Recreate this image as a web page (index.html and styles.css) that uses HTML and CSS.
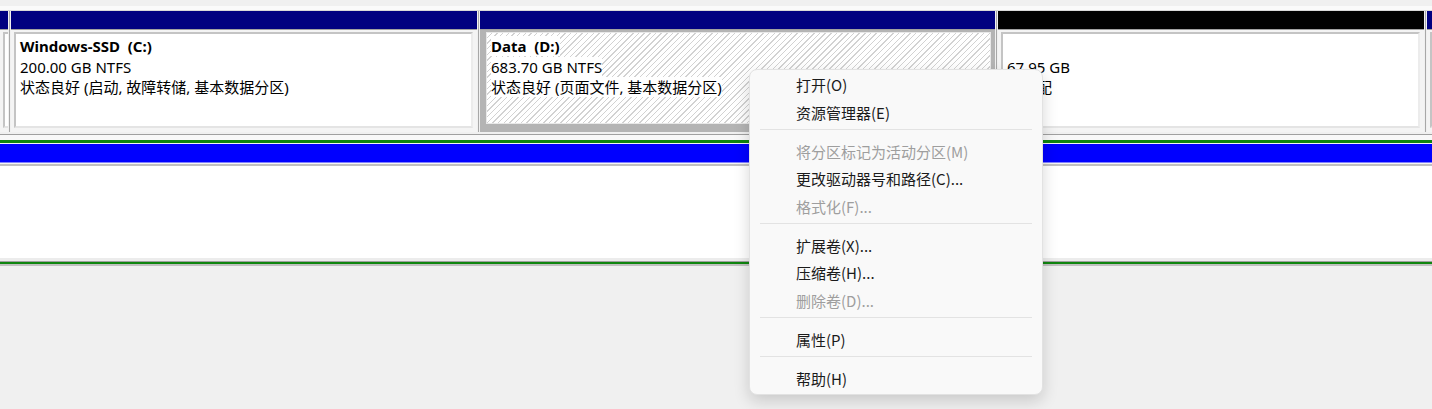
FILE: index.html
```html
<!DOCTYPE html>
<html lang="zh-CN">
<head>
  <meta charset="UTF-8" />
  <title>磁盘管理</title>
  <link rel="stylesheet" href="styles.css">
</head>
<body>
  <div class="top-edge"></div>

  <div class="disk">
    <div class="part part-edge">
      <div class="part-head"></div>
      <div class="part-body"><div class="box"></div></div>
    </div>
    <div class="part part-c">
      <div class="part-head"></div>
      <div class="part-body">
        <div class="box">
          <div class="line name">Windows-SSD&nbsp; (C:)</div>
          <div class="line">200.00 GB NTFS</div>
          <div class="line">状态良好 (启动, 故障转储, 基本数据分区)</div>
        </div>
      </div>
    </div>
    <div class="part part-d selected">
      <div class="part-head"></div>
      <div class="part-body">
        <div class="box hatched">
          <div class="line name"><span>Data&nbsp; (D:)</span></div>
          <div class="line"><span>683.70 GB NTFS</span></div>
          <div class="line"><span>状态良好 (页面文件, 基本数据分区)</span></div>
        </div>
      </div>
    </div>
    <div class="part part-free">
      <div class="part-head black"></div>
      <div class="part-body">
        <div class="box">
          <div class="line">&nbsp;</div>
          <div class="line">67.95 GB</div>
          <div class="line">未分配</div>
        </div>
      </div>
    </div>
    <div class="part part-edge">
      <div class="part-head"></div>
      <div class="part-body"><div class="box"></div></div>
    </div>
  </div>

  <div class="disk2">
    <div class="ext">
      <div class="ext-head"></div>
      <div class="ext-body"></div>
    </div>
  </div>

  <div class="menu">
    <div class="item">打开(O)</div>
    <div class="item">资源管理器(E)</div>
    <div class="sep"></div>
    <div class="item off">将分区标记为活动分区(M)</div>
    <div class="item">更改驱动器号和路径(C)...</div>
    <div class="item off">格式化(F)...</div>
    <div class="sep"></div>
    <div class="item">扩展卷(X)...</div>
    <div class="item">压缩卷(H)...</div>
    <div class="item off">删除卷(D)...</div>
    <div class="sep"></div>
    <div class="item">属性(P)</div>
    <div class="sep"></div>
    <div class="item">帮助(H)</div>
  </div>
</body>
</html>
```

FILE: styles.css
```css
body {
  margin: 0;
  height: 409px;
  overflow: hidden;
  position: relative;
  background-color: #f0f0f0;
  color: #000;
  font-family: "Segoe UI", "Noto Sans", "Noto Sans CJK SC", sans-serif;
  font-size: 15px;
}
.top-edge {
  height: 6px;
  border-bottom: 4px solid #fafafa;
  box-shadow: 0 1px 0 #d8d8d8;
}
.disk {
  display: flex;
  gap: 1px;
  height: 121px;
  margin-top: 1px;
  overflow: hidden;
}
.part {
  display: flex;
  flex-direction: column;
  box-sizing: border-box;
  min-width: 0;
  overflow: hidden;
  border-left: 1px solid #a8a8a8;
  padding-left: 1px;
}
.part-edge {
  flex: 0 0 8px;
}
.part-edge:first-child {
  border-left: none;
  padding-left: 0;
}
.part-edge:last-child {
  flex: 1 0 8px;
}
.part-c {
  flex: 0 0 468px;
}
.part-d {
  flex: 0 0 517px;
}
.part-free {
  flex: 0 0 428px;
}
.part-head {
  flex: 0 0 18px;
  background-color: #000080;
  border-bottom: 1px solid #a0a0a0;
}
.part-head.black {
  background-color: #000;
}
.part-body {
  flex: 1;
  display: flex;
  min-width: 0;
  padding: 2px 4px 4px 3px;
  background-color: #f4f4f4;
}
.box {
  flex: 1;
  min-width: 0;
  box-sizing: border-box;
  background-color: #fff;
  border: 2px solid;
  border-color: #c4c4c4 #ececec #e4e4e4 #c4c4c4;
  padding: 2px 4px 0 4px;
  overflow: hidden;
}
.line {
  line-height: 20.5px;
  white-space: nowrap;
}
.name {
  font-weight: bold;
}
.selected .part-body {
  background-color: #b4b4b4;
  padding: 2px 4px 8px 6px;
}
.selected .box {
  border: 1px solid #e8e8e8;
  padding: 3px 4px 0 4px;
}
.hatched {
  background: repeating-linear-gradient(135deg, #fff 0 3px, #d2d2d2 3px 4px);
}
.hatched span {
  background-color: #fff;
}

.disk2 {
  margin-top: 2px;
  border-top: 1px solid #a0a0a0;
  padding-top: 5px;
  background-color: #f8f8f8;
}
.ext {
  border-top: 3px solid #0f850f;
  border-bottom: 3px solid #0f850f;
  padding-top: 1px;
  background-color: #f4f4f4;
}
.ext-head {
  height: 18px;
  background-color: #0000ff;
  border-bottom: 1px solid #8080ff;
  margin-bottom: 1px;
}
.ext-body {
  height: 92px;
  background-color: #fff;
  border-top: 2px solid #c0c0c0;
  border-bottom: 3px solid #ececec;
  box-shadow: 0 1px 0 #a0a0a0;
}
.disk2::after {
  content: "";
  display: block;
  height: 2px;
  background-color: #c0c0c0;
}

.menu {
  position: absolute;
  left: 749px;
  top: 69px;
  width: 294px;
  box-sizing: border-box;
  padding: 1px 0 2px;
  background-color: #f9f9f9;
  border: 1px solid #e2e2e2;
  border-radius: 8px;
  box-shadow: 0 6px 16px rgba(0, 0, 0, 0.16);
  font-family: "Noto Sans CJK SC", "Noto Sans", sans-serif;
  color: #1b1b1b;
}
.item {
  height: 27.5px;
  line-height: 27.5px;
  padding-left: 46px;
  white-space: nowrap;
}
.item.off {
  color: #9e9e9e;
}
.sep {
  height: 1px;
  margin: 3px 10px 7.5px 10px;
  background-color: #e3e3e3;
}
```
